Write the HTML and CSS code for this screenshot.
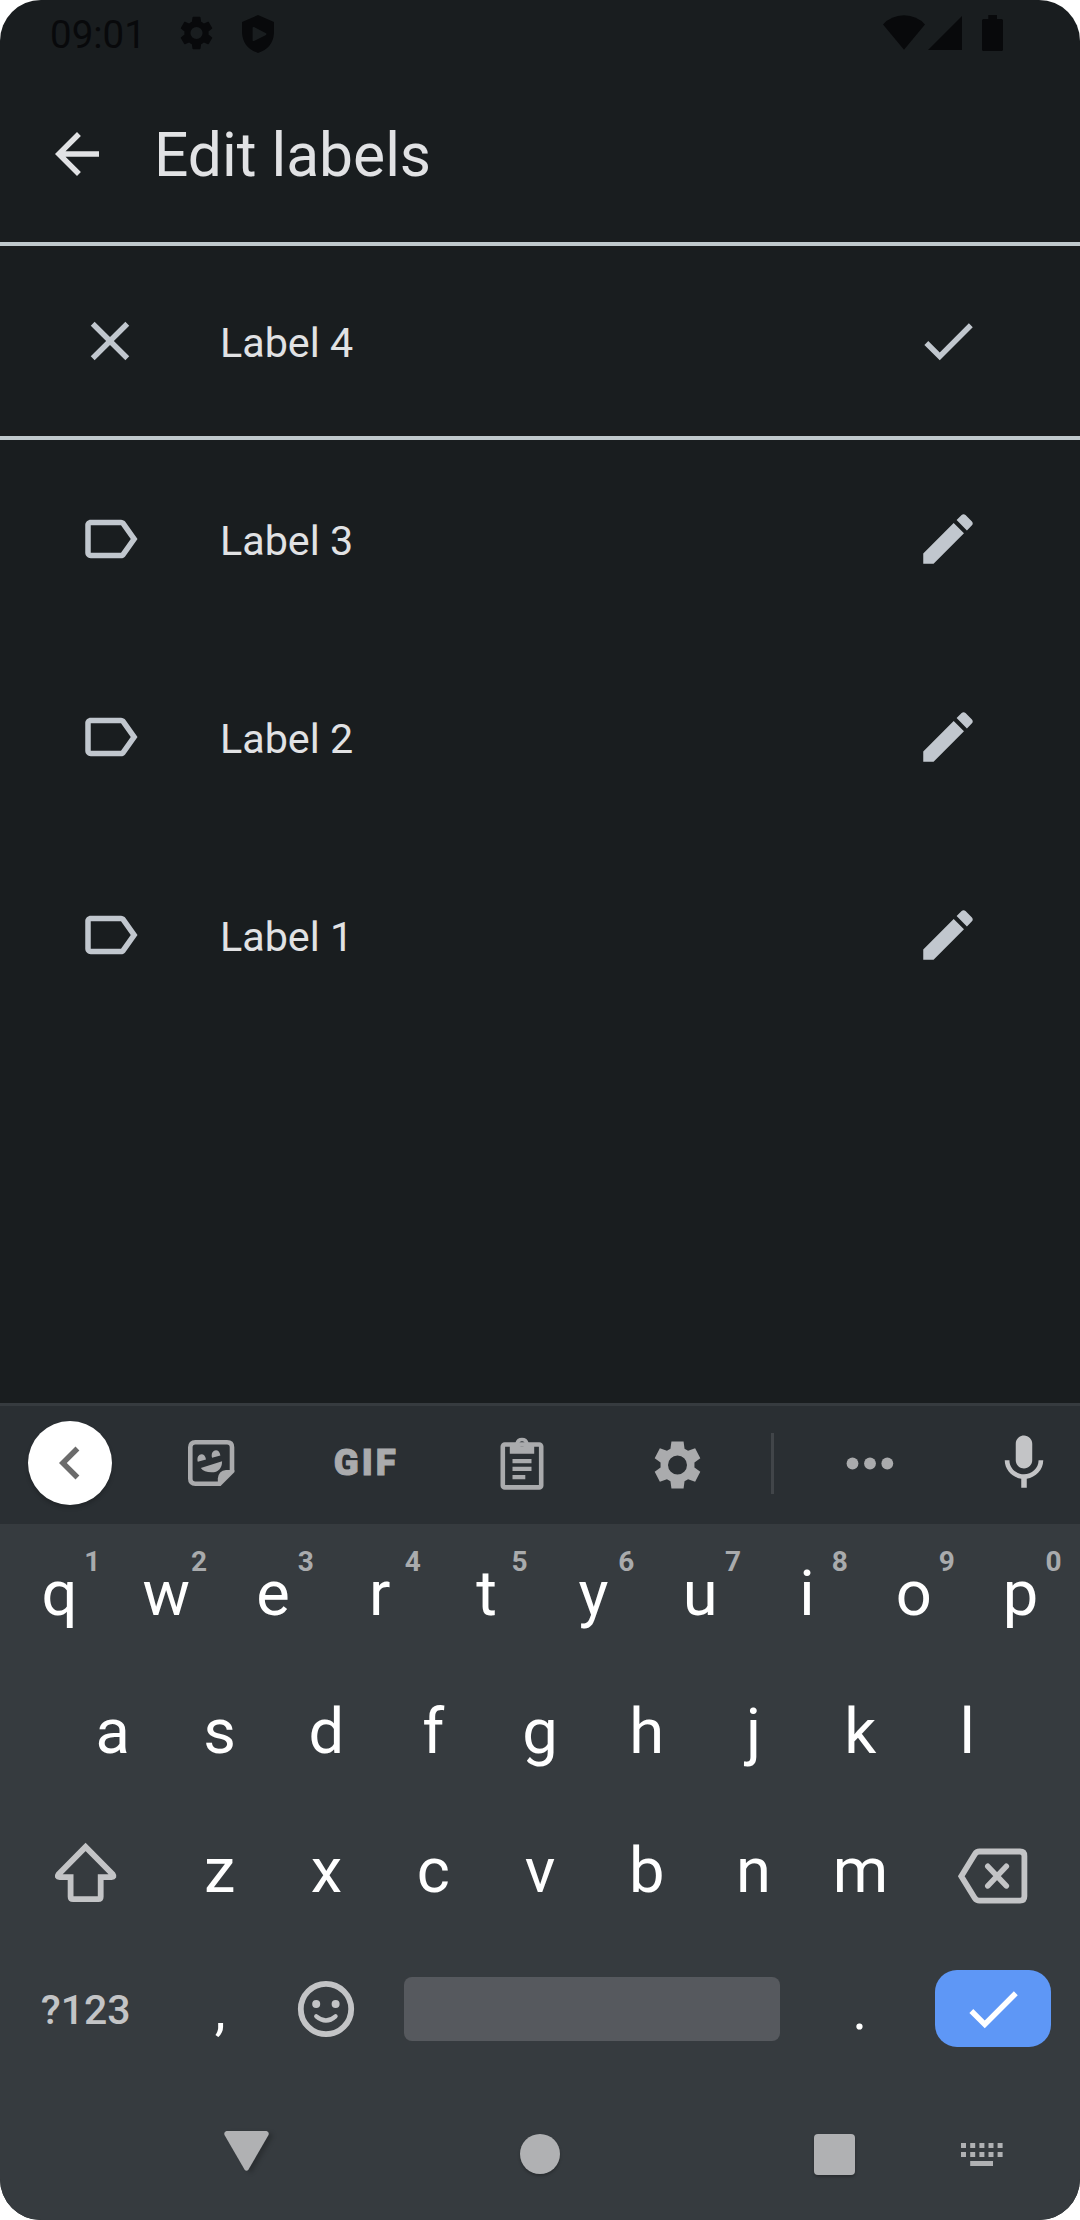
FILE: index.html
```html
<!DOCTYPE html>
<html lang="en">
<head>
<meta charset="utf-8">
<title>Edit labels</title>
<link rel="stylesheet" href="styles.css">
</head>
<body>
<svg class="defs" width="0" height="0" aria-hidden="true">
  <symbol id="check" viewBox="0 0 24 24"><path d="M9 16.17L4.83 12l-1.42 1.41L9 19 21 7l-1.41-1.41z"/></symbol>
  <symbol id="label" viewBox="0 0 24 24"><path d="M17.63 5.84C17.27 5.33 16.67 5 16 5L5 5.01C3.9 5.01 3 5.9 3 7v10c0 1.1.9 1.99 2 1.99L16 19c.67 0 1.27-.33 1.63-.84L22 12l-4.37-6.16zM16 17H5V7h11l3.55 5L16 17z"/></symbol>
  <symbol id="pencil" viewBox="0 0 24 24"><path d="M3 17.25V21h3.75L17.81 9.94l-3.75-3.75L3 17.25zM20.71 7.04c.39-.39.39-1.02 0-1.41l-2.34-2.34c-.39-.39-1.02-.39-1.41 0l-1.83 1.83 3.75 3.75 1.83-1.83z"/></symbol>
</svg>
<main class="phone">
  <header class="status">
    <span class="clock">09:01</span>
    <svg class="status-gear" viewBox="2.2 2 19.6 20"><path d="M19.14 12.94c.04-.3.06-.61.06-.94 0-.32-.02-.64-.07-.94l2.03-1.58c.18-.14.23-.41.12-.61l-1.92-3.32c-.12-.22-.37-.29-.59-.22l-2.39.96c-.5-.38-1.03-.7-1.62-.94l-.36-2.54c-.04-.24-.24-.41-.48-.41h-3.84c-.24 0-.43.17-.47.41l-.36 2.54c-.59.24-1.13.57-1.62.94l-2.39-.96c-.22-.08-.47 0-.59.22L2.74 8.87c-.12.21-.08.47.12.61l2.03 1.58c-.05.3-.09.63-.09.94s.02.64.07.94l-2.03 1.58c-.18.14-.23.41-.12.61l1.92 3.32c.12.22.37.29.59.22l2.39-.96c.5.38 1.03.7 1.62.94l.36 2.54c.05.24.24.41.48.41h3.84c.24 0 .44-.17.47-.41l.36-2.54c.59-.24 1.13-.56 1.62-.94l2.39.96c.22.08.47 0 .59-.22l1.92-3.32c.12-.22.07-.47-.12-.61l-2.01-1.58zM12 15.6A3.6 3.6 0 1 1 12 8.4a3.6 3.6 0 0 1 0 7.200z"/></svg>
    <svg class="status-shield" viewBox="0 0 32 38"><path fill-rule="evenodd" d="M16 0L32 7V18Q31 33 16 38Q1 33 0 18V7ZM10.600 12.500V25.500Q11 26.300 12 26L24 20Q24.800 19 24 18.300L12 12Q11 11.600 10.600 12.500Z"/></svg>
    <span class="spacer"></span>
    <svg class="status-wifi" viewBox="0 0 42 35"><path d="M0 9.500Q8 .5 21 .3Q34 .5 42 9.500L21 34.800Z"/></svg>
    <svg class="status-cell" viewBox="0 0 34 34"><path d="M34 0V34H0Z"/></svg>
    <svg class="status-battery" viewBox="0 0 21 36"><path d="M6.300 0H15V4H19.500Q21 4 21 5.500V34.500Q21 36 19.500 36H1.500Q0 36 0 34.500V5.500Q0 4 1.500 4H6.300Z"/></svg>
  </header>
  <div class="appbar">
    <svg class="icon back" viewBox="0 0 24 24"><path d="M20 11H7.830l5.590-5.590L12 4l-8 8 8 8 1.410-1.410L7.830 13H20v-2z"/></svg>
    <h1>Edit labels</h1>
  </div>
  <div class="row editing">
    <svg class="icon" viewBox="0 0 24 24"><path d="M19 6.410L17.590 5 12 10.590 6.410 5 5 6.410 10.590 12 5 17.590 6.410 19 12 13.410 17.590 19 19 17.590 13.410 12z"/></svg>
    <span class="name">Label 4</span>
    <svg class="icon"><use href="#check"/></svg>
  </div>
  <div class="row"><svg class="icon"><use href="#label"/></svg><span class="name">Label 3</span><svg class="icon"><use href="#pencil"/></svg></div>
  <div class="row"><svg class="icon"><use href="#label"/></svg><span class="name">Label 2</span><svg class="icon"><use href="#pencil"/></svg></div>
  <div class="row"><svg class="icon"><use href="#label"/></svg><span class="name">Label 1</span><svg class="icon"><use href="#pencil"/></svg></div>

  <section class="keyboard">
    <div class="tools">
      <div class="collapse"><svg class="icon" viewBox="0 0 24 24"><path d="M15.410 7.410L14 6l-6 6 6 6 1.410-1.410L10.830 12z"/></svg></div>
      <div class="tool">
        <svg width="50" height="50" viewBox="0 0 50 50">
          <path class="line" stroke-width="4.600" d="M34 45.700H9.300Q4.300 45.700 4.300 40.700V9.300Q4.300 4.300 9.300 4.300H41Q46 4.300 46 9.300V34"/>
          <path d="M31.800 48V40.500Q32.500 32.800 40 32H48.300V34.300L34.600 48Z"/>
          <path d="M11.800 23.700C9.500 15.500 19 12.800 20 21.500ZM26.100 19.700C23.800 11.500 33.400 8.800 34.400 17.500Z"/>
          <path d="M14.800 30L36.100 23.200Q35.800 34.300 25.500 34.300Q18 34.300 14.800 30Z"/>
        </svg>
      </div>
      <div class="tool"><span class="gif">GIF</span></div>
      <div class="tool">
        <svg width="46" height="56" viewBox="0 0 46 56">
          <rect class="line" stroke-width="4.600" x="3.800" y="9.500" width="38.400" height="42.900" rx="2"/>
          <path fill-rule="evenodd" d="M10.800 8H16.300A6.900 6.900 0 0 1 29.700 8H35.200V18.700H10.800ZM23 6.300a2.700 2.700 0 1 0 0 5.400a2.700 2.700 0 1 0 0-5.400Z"/>
          <path d="M13.500 24H32.500V28.200H13.500ZM13.500 31.800H32.500V36H13.500ZM13.500 40H26.300V44.200H13.500Z"/>
        </svg>
      </div>
      <div class="tool">
        <svg class="gear" viewBox="-24 -24 48 48"><path fill-rule="evenodd" d="M-6.200 -24H6.200L7.200 -16.500L10.800 -14.500L18 -17.100L23.300 -7L17.300 -2.500V2.500L23.300 7L18 17.100L10.800 14.500L7.200 16.500L6.200 24H-6.200L-7.200 16.500L-10.800 14.500L-18 17.100L-23.300 7L-17.300 2.500V-2.500L-23.300 -7L-18 -17.100L-10.800 -14.500L-7.200 -16.500ZM0 -9.700A9.700 9.700 0 1 0 0 9.700A9.700 9.700 0 1 0 0 -9.700Z"/></svg>
      </div>
      <span class="divider"></span>
      <div class="tool more">
        <svg width="48" height="14" viewBox="0 0 48 14"><circle cx="6.500" cy="7.500" r="5.900"/><circle cx="24" cy="7.500" r="5.900"/><circle cx="41.300" cy="7.500" r="5.900"/></svg>
      </div>
      <svg class="icon mic" viewBox="0 0 24 24"><path d="M12 14c1.660 0 2.990-1.340 2.990-3L15 5c0-1.660-1.340-3-3-3S9 3.340 9 5v6c0 1.660 1.340 3 3 3zm5.300-3c0 3-2.540 5.100-5.300 5.100S6.700 14 6.700 11H5c0 3.410 2.720 6.230 6 6.720V21h2v-3.280c3.280-.48 6-3.300 6-6.720h-1.700z"/></svg>
    </div>
    <div class="keys">
      <span class="key">q<i>1</i></span><span class="key">w<i>2</i></span><span class="key">e<i>3</i></span><span class="key">r<i>4</i></span><span class="key">t<i>5</i></span><span class="key">y<i>6</i></span><span class="key">u<i>7</i></span><span class="key">i<i>8</i></span><span class="key">o<i>9</i></span><span class="key">p<i>0</i></span>
    </div>
    <div class="keys home">
      <span class="key">a</span><span class="key">s</span><span class="key">d</span><span class="key">f</span><span class="key">g</span><span class="key">h</span><span class="key">j</span><span class="key">k</span><span class="key">l</span>
    </div>
    <div class="keys">
      <span class="key wide"><svg width="70" height="70" viewBox="0 0 70 70"><path class="line" stroke-width="5.800" d="M34.600 11.900L7.400 39.400Q5.400 42.100 8.600 42.100H19.600V61.700Q19.600 64.200 22.100 64.200H47.200Q49.700 64.200 49.700 61.700V42.100H60.600Q63.800 42.100 61.800 39.400Z"/></svg></span>
      <span class="key">z</span><span class="key">x</span><span class="key">c</span><span class="key">v</span><span class="key">b</span><span class="key">n</span><span class="key">m</span>
      <span class="key wide"><svg width="80" height="70" viewBox="0 0 80 70"><path class="line" stroke-width="5.800" d="M7.300 41.200L20.800 19.200Q22.500 16.500 25.500 16.500H66Q70.400 16.500 70.400 20.900V61.300Q70.400 65.700 66 65.700H25.500Q22.500 65.700 20.800 63.200Z"/><path class="line" stroke-width="5.600" stroke-linecap="round" d="M33.800 31.300L52.300 50.900M52.300 31.300L33.800 50.900"/></svg></span>
    </div>
    <div class="keys">
      <span class="key wide symbols">?123</span>
      <span class="key punct">,</span>
      <span class="key emoji"><svg width="60" height="60" viewBox="0 0 60 60"><circle class="line" stroke-width="5.800" cx="30" cy="30" r="25.200"/><circle cx="20.200" cy="25" r="4"/><circle cx="39.600" cy="25" r="4"/><path class="line" stroke-width="4.400" stroke-linecap="round" d="M20.300 37.300Q30 45.700 39.500 37.300"/></svg></span>
      <span class="spacebar"></span>
      <span class="key punct">.</span>
      <span class="key wide"><span class="enter"><svg class="icon"><use href="#check"/></svg></span></span>
    </div>
    <nav class="nav">
      <svg class="nav-back" viewBox="0 0 45 40"><path d="M2.500 0H42.500Q45.500 .8 44.500 4L24.500 38.600Q22.500 41 20.500 38.600L.5 4Q-.5 .8 2.500 0Z"/></svg>
      <span class="nav-home"></span>
      <span class="nav-recent"></span>
      <svg class="nav-ime" viewBox="0 0 42 23"><path d="M0 0h5v5h-5zM9.200 0h5v5h-5zM18.400 0h5v5h-5zM27.500 0h5v5h-5zM36.600 0h5v5h-5zM0 9h5v5h-5zM9.200 9h5v5h-5zM18.400 9h5v5h-5zM27.500 9h5v5h-5zM36.600 9h5v5h-5zM9.200 18H32v5H9.200z"/></svg>
    </nav>
  </section>
</main>
</body>
</html>
```

FILE: styles.css
```css
* { box-sizing: border-box; }
body { margin: 0; background: #fff; font-family: Roboto, sans-serif; }
svg { display: block; flex: none; fill: currentColor; }
.defs { position: absolute; }
.line { fill: none; stroke: currentColor; }
.icon { width: 66px; height: 66px; }
.spacer { flex: 1; }

.phone {
  display: flex;
  flex-direction: column;
  width: 1080px;
  height: 2220px;
  overflow: hidden;
  border-radius: 41px;
  background: #191d1f;
  color: #c1c7ce;
}

.status {
  display: flex;
  align-items: flex-start;
  height: 66px;
  padding: 15px 77px 0 50px;
  color: #08090b;
}
.clock { width: 130px; font-size: 38.500px; line-height: 39px; }
.status-gear { width: 33px; height: 36px; margin-right: 29px; }
.status-shield { width: 32px; height: 38px; }
.status-wifi { width: 42px; height: 35px; margin-right: 3px; }
.status-cell { width: 34px; height: 34px; margin: 1px 20px 0 0; }
.status-battery { width: 21px; height: 36px; }

.appbar {
  display: flex;
  align-items: center;
  height: 176px;
  padding: 0 44px 0;
  color: #e1e2e4;
}
.appbar h1 { margin: 3px 0 0 44px; font-size: 60.500px; font-weight: 400; line-height: 72px; }

.row {
  display: flex;
  align-items: center;
  height: 198px;
  padding: 0 99px 0 77px;
}
.editing { border: solid #bfc8cc; border-width: 4px 0; }
.name { flex: 1; margin-left: 77px; padding-top: 3px; color: #e1e2e4; font-size: 41.250px; line-height: 48px; }

.keyboard { margin-top: auto; height: 817px; background: #363b3f; color: #c3c4c6; }
.tools {
  display: flex;
  align-items: center;
  height: 121px;
  padding: 0 0 4px 28px;
  border-top: 3px solid #363b3f;
  background: #2a2f33;
  color: #aaabad;
}
.collapse {
  display: flex;
  align-items: center;
  width: 84px;
  height: 84px;
  margin-right: 21px;
  padding-left: 9px;
  border-radius: 50%;
  background: #fff;
  color: #6b6b6b;
  box-shadow: 0 3px 4px rgba(0, 0, 0, .2);
}
.tool { display: flex; flex: none; justify-content: center; width: 155.500px; }
.gif { font-size: 36.500px; font-weight: 900; line-height: 44px; letter-spacing: 3px; -webkit-text-stroke: 1px currentColor; }
.gear { width: 47px; height: 48px; margin-top: 3px; }
.divider { width: 3px; height: 61px; margin-left: 16px; background: #414549; }
.more { width: 191px; }
.mic { margin-left: 26px; color: #c3c4c6; }

.keys { display: flex; justify-content: center; align-items: center; height: 138.500px; padding: 0 6px; }
.home { padding-bottom: 2px; }
.key {
  position: relative;
  display: flex;
  flex: none;
  align-items: center;
  justify-content: center;
  width: 106.800px;
  height: 138.500px;
  color: #fff;
  font-size: 63.250px;
}
.key i {
  position: absolute;
  top: 24px;
  right: 0;
  width: 41px;
  color: #a9abad;
  font-size: 28px;
  font-style: normal;
  font-weight: 700;
  line-height: 28px;
  text-align: center;
}
.key > svg { color: #c3c4c6; }
.emoji { padding-right: 2px; }
.wide { width: 160.200px; }
.symbols { padding: 2px 2px 0 0; color: #c3c4c6; font-size: 41px; font-weight: 500; }
.punct { font-size: 55px; padding-top: 3px; }
.spacebar { width: 376px; height: 64px; margin: 0 26px 0 24px; border-radius: 8px; background: #56595e; }
.enter {
  display: flex;
  align-items: center;
  justify-content: center;
  width: 116px;
  height: 77px;
  border-radius: 22px;
  background: #5e97f6;
}
.enter .icon { color: #fff; }

.nav { display: flex; align-items: flex-start; padding: 53px 0 0 224px; color: #b0b1b3; }
.nav-back { width: 45px; height: 40px; margin-right: 251px; filter: drop-shadow(4px 2px 2px rgba(0, 0, 0, .2)); }
.nav-home { width: 40px; height: 40px; margin: 3px 254px 0 0; border-radius: 50%; background: currentColor; box-shadow: 0 2px 3px rgba(0, 0, 0, .25); }
.nav-recent { width: 41px; height: 41px; margin: 3px 106px 0 0; border-radius: 4px; background: currentColor; box-shadow: 0 2px 3px rgba(0, 0, 0, .25); }
.nav-ime { width: 42px; height: 23px; margin-top: 12px; }
```
